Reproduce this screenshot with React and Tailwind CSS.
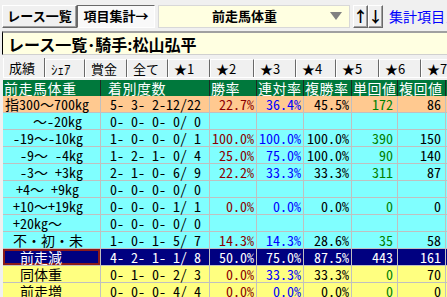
import React from 'react'

const TABS = [
  { t: '成績', w: 'w-[42px]' },
  { t: 'ｼｪｱ', w: 'w-[40px]' },
  { t: '賞金', w: 'w-[42px]' },
  { t: '全て', w: 'w-[41px]' },
  { t: '★1', w: 'w-[42px]' },
  { t: '★2', w: 'w-[44px]' },
  { t: '★3', w: 'w-[42px]' },
  { t: '★4', w: 'w-[40px]' },
  { t: '★5', w: 'w-[43px]' },
  { t: '★6', w: 'w-[42px]' },
  { t: '★7', w: 'w-[42px]' },
]

const COLS = ['w-[98px]', 'w-[109px]', 'w-[47px]', 'w-[47px]', 'w-[48px]', 'w-[46px]', 'w-[48px]', 'w-[60px]']
const HEAD = ['前走馬体重', '着別度数', '勝率', '連対率', '複勝率', '単回値', '複回値', '']
const TONES = ['text-[#8b0000]', 'text-[#0000ff]', 'text-black', 'text-[#008000]', 'text-black']

const ROWS = [
  { bg: 'bg-[#ffc990]', pl: 'pl-[2px]', label: '指300～700kg', cnt: '5- 3- 2-12/22', v: ['22.7%', '36.4%', '45.5%', '172', '86'] },
  { bg: 'bg-[#80ffff]', pl: 'pl-[30px]', label: '～-20kg', cnt: '0- 0- 0- 0/ 0', v: ['', '', '', '', ''] },
  { bg: 'bg-[#80ffff]', pl: 'pl-[10px]', label: '-19～-10kg', cnt: '1- 0- 0- 0/ 1', v: ['100.0%', '100.0%', '100.0%', '390', '150'] },
  { bg: 'bg-[#80ffff]', pl: 'pl-[17px]', label: '-9～ -4kg', cnt: '1- 2- 1- 0/ 4', v: ['25.0%', '75.0%', '100.0%', '90', '140'] },
  { bg: 'bg-[#80ffff]', pl: 'pl-[17px]', label: '-3～ +3kg', cnt: '2- 1- 0- 6/ 9', v: ['22.2%', '33.3%', '33.3%', '311', '87'] },
  { bg: 'bg-[#80ffff]', pl: 'pl-[13px]', label: '+4～ +9kg', cnt: '0- 0- 0- 0/ 0', v: ['', '', '', '', ''] },
  { bg: 'bg-[#80ffff]', pl: 'pl-[10px]', label: '+10～+19kg', cnt: '0- 0- 0- 1/ 1', v: ['0.0%', '0.0%', '0.0%', '0', '0'] },
  { bg: 'bg-[#80ffff]', pl: 'pl-[10px]', label: '+20kg～', cnt: '0- 0- 0- 0/ 0', v: ['', '', '', '', ''] },
  { bg: 'bg-[#80ffff]', pl: 'pl-[10px]', label: '不・初・未', cnt: '1- 0- 1- 5/ 7', v: ['14.3%', '14.3%', '28.6%', '35', '58'] },
  { bg: 'bg-[#000080]', pl: 'pl-[15px]', label: '前走減', cnt: '4- 2- 1- 1/ 8', v: ['50.0%', '75.0%', '87.5%', '443', '161'], sel: true },
  { bg: 'bg-[#ffff80]', pl: 'pl-[17px]', label: '同体重', cnt: '0- 1- 0- 2/ 3', v: ['0.0%', '33.3%', '33.3%', '0', '70'] },
  { bg: 'bg-[#ffff80]', pl: 'pl-[17px]', label: '前走増', cnt: '0- 0- 0- 4/ 4', v: ['0.0%', '0.0%', '0.0%', '0', '0'] },
]

const raised = 'border border-t-white border-l-white border-r-[#696969] border-b-[#696969] shadow-[inset_-1px_-1px_0_#a0a0a0]'

function Row({ r }) {
  return (
    <div className={`flex h-[17px] border-b border-[#c0c0c0] ${r.bg} ${r.sel ? 'text-white' : 'text-black'}`}>
      <div className={`${COLS[0]} shrink-0 border-r border-[#c0c0c0]`}>
        <div className={`h-full flex items-center whitespace-pre ${r.pl} ${r.sel ? 'border-2 border-[#8b1a1a]' : ''}`}>{r.label}</div>
      </div>
      <div className={`${COLS[1]} shrink-0 border-r border-[#c0c0c0] flex items-center pl-[9px] whitespace-pre`}>{r.cnt}</div>
      {r.v.map((x, i) => (
        <div
          key={i}
          className={`${COLS[i + 2]} shrink-0 border-r border-[#c0c0c0] flex items-center justify-end ${i < 3 ? 'pr-[2px]' : 'pr-[4px]'} ${r.sel ? 'text-white' : TONES[i]}`}
        >
          {x}
        </div>
      ))}
      <div className={`${COLS[7]} shrink-0`}></div>
    </div>
  )
}

export default function App() {
  return (
    <div className="w-[447px] h-[297px] overflow-hidden bg-[#f0f0f0] text-black font-['Noto_Sans_CJK_JP',sans-serif]">
      {/* ツールバー */}
      <div className="flex items-center h-[31px] pl-[2px] pt-[1px] whitespace-nowrap overflow-hidden">
        <div className={`shrink-0 h-[23px] w-[75px] ${raised} flex items-center justify-center text-[13px] font-bold`}>レース一覧</div>
        <div className="shrink-0 h-[23px] w-[78px] border border-t-[#696969] border-l-[#696969] border-r-white border-b-white bg-[#f9f9f9] flex items-center justify-center text-[13px] font-bold">項目集計→</div>
        <div className="shrink-0 ml-[3px] h-[23px] w-[192px] border border-[#d8d8d8] bg-[#ffffe1] flex items-center">
          <span className="flex-1 text-center text-[13px] font-bold">前走馬体重</span>
          <svg width="12" height="8" viewBox="0 0 12 8" className="mr-[7px]">
            <path d="M0 0 H12 L6 8 Z" fill="#808080" />
          </svg>
        </div>
        <div className={`shrink-0 ml-[3px] h-[23px] w-[15px] ${raised} flex items-center justify-center text-[15px] font-bold`}>↑</div>
        <div className={`shrink-0 h-[23px] w-[15px] ${raised} flex items-center justify-center text-[15px] font-bold`}>↓</div>
        <div className="shrink-0 ml-[6px] text-[14px] text-[#0000ff]">集計項目メニュー</div>
      </div>

      {/* タイトル */}
      <div className="ml-[2px] h-[24px] border-t-2 border-t-[#a0a0a0] border-l border-l-black border-b border-b-[#d0d0d0] bg-[#ffffe1] flex items-center pl-[5px] text-[16px] font-bold whitespace-nowrap">
        レース一覧･騎手:松山弘平
      </div>

      {/* タブ */}
      <div className="mt-[3px] ml-[3px] flex items-end h-[20px] whitespace-nowrap text-[13px] overflow-hidden border-b border-b-white">
        {TABS.map((t, i) => (
          <div
            key={t.t}
            className={`${t.w} shrink-0 flex items-center pl-[5px] border-t border-l border-t-white border-l-white border-r border-r-[#696969] ${i === 0 ? 'h-[20px]' : 'h-[18px]'}`}
          >
            {t.t}
          </div>
        ))}
      </div>

      {/* 集計表 */}
      <div className="mt-[2px] ml-[3px] w-[444px] overflow-hidden text-[14px] leading-[16px] font-['Noto_Sans_Mono_CJK_JP','Liberation_Mono','Noto_Sans_CJK_JP',monospace]">
        <div className="w-[520px]">
          <div className="flex h-[16px] bg-[#00783c] text-white">
            {HEAD.map((h, i) => (
              <div key={i} className={`${COLS[i]} shrink-0 border-r border-[#1e2a22] flex items-center tracking-[0.5px] whitespace-pre overflow-hidden ${i === 1 ? 'pl-[7px]' : 'pl-[1px]'}`}>
                {h}
              </div>
            ))}
          </div>
          {ROWS.map((r, i) => (
            <Row key={i} r={r} />
          ))}
        </div>
      </div>
    </div>
  )
}
